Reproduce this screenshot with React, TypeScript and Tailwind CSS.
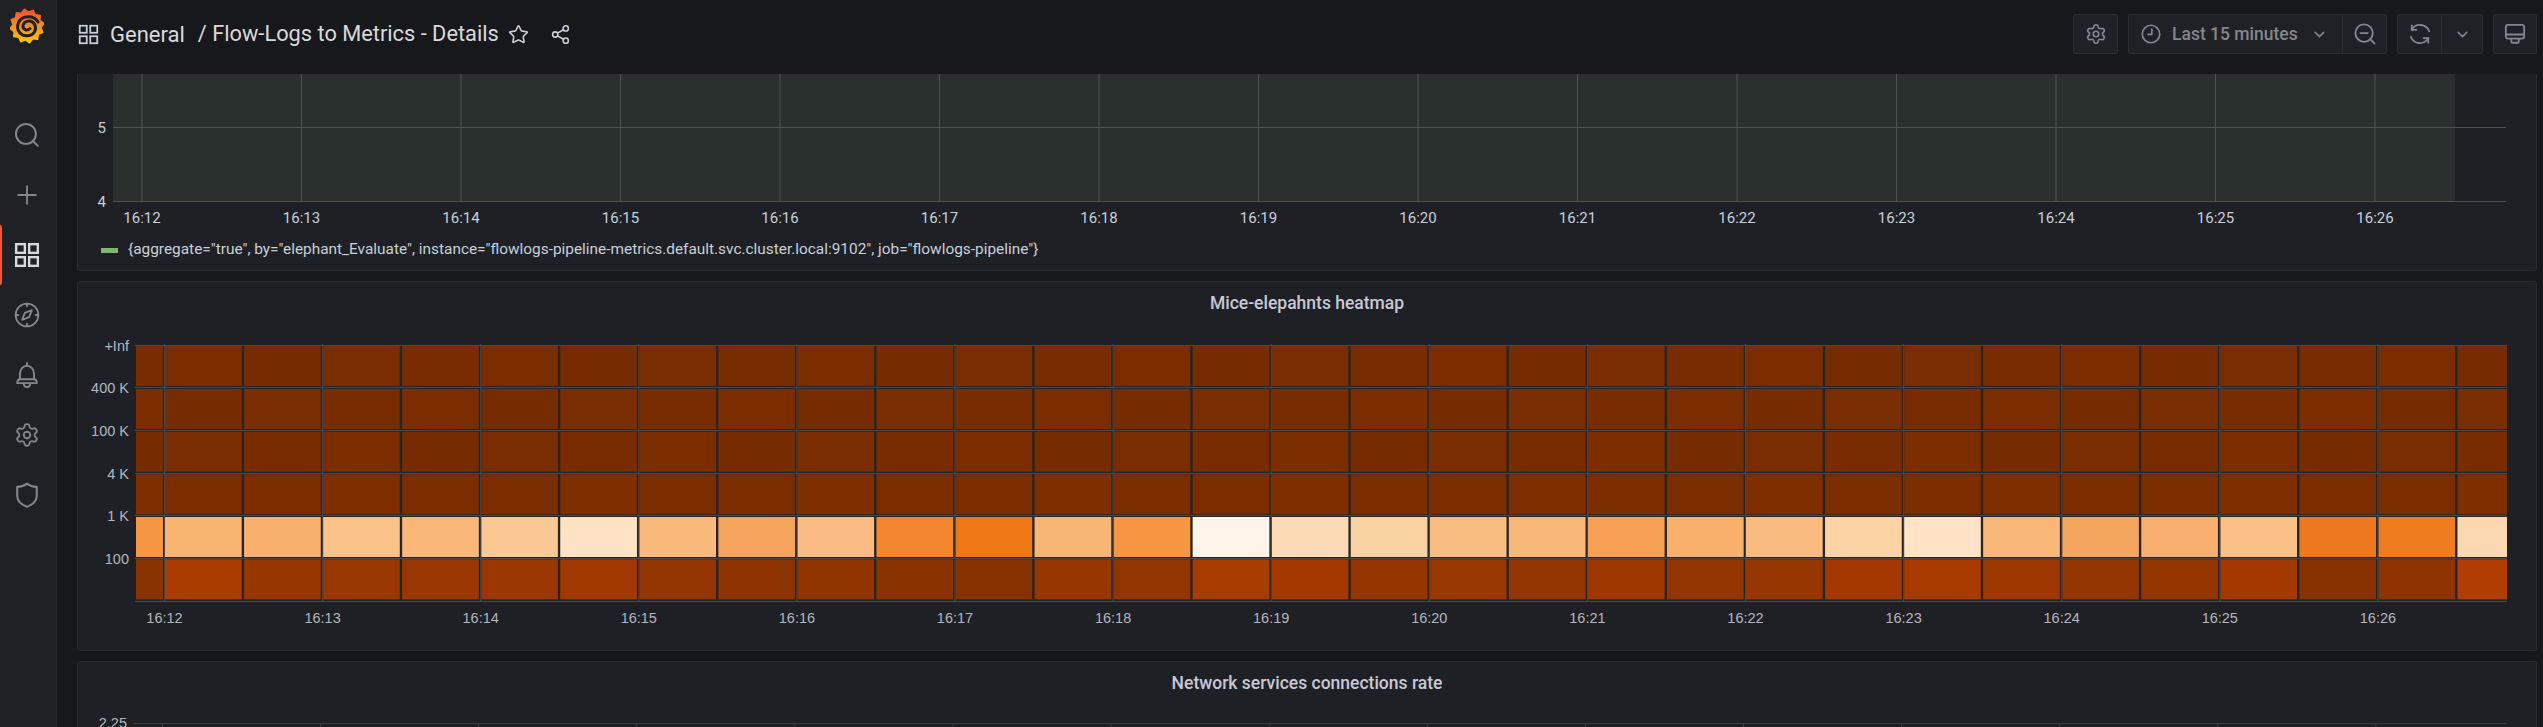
import React from "react";
import { Plus, Settings, Star, Share2, ChevronDown } from "lucide-react";

const minutes = ["16:12", "16:13", "16:14", "16:15", "16:16", "16:17", "16:18", "16:19", "16:20", "16:21", "16:22", "16:23", "16:24", "16:25", "16:26"];

const peakRow = [
  "#f59644", "#f8b471", "#f7b06e", "#fac188", "#f8b678", "#fbc894", "#fde2c4", "#f9b97b", "#f6a45c", "#fabc84", "#f58630",
  "#ee7716", "#f8b674", "#f69642", "#fef4e8", "#fbdab5", "#f9d2a2", "#f9bd80", "#f7b778", "#f6a055", "#f8b06c",
  "#f9bb7f", "#fbd3a4", "#fee3c6", "#f8b678", "#f5a65e", "#f7ae6e", "#fac088", "#ed781e", "#ef7d20", "#fcd8b0",
];

const lowRow = [
  "#873400", "#ab3c00", "#983600", "#993700", "#9a3700", "#9b3700", "#a03800", "#933500", "#8c3300", "#903400", "#8b3300",
  "#863200", "#983600", "#923500", "#a93c00", "#a33900", "#953600", "#983700", "#923500", "#9f3700", "#933500",
  "#963600", "#a23800", "#a83a00", "#9e3800", "#933500", "#943500", "#a43900", "#873200", "#8f3300", "#b13e00",
];

const darkTones = ["#792c00", "#7a2d00", "#772b00", "#7b2d00"];
const rowTops = [346, 389, 431.7, 474.3, 517, 559.3];
const rowLines = [345.5, 387.5, 430.5, 473.5, 515.5, 558.5, 601.5];
const rowLabels = ["+Inf", "400 K", "100 K", "4 K", "1 K", "100"];

const cellColor = (row: number, col: number) => {
  if (row === 4) return peakRow[col];
  if (row === 5) return lowRow[col];
  if (row === 3) return col % 3 === 0 ? "#7f2e00" : "#7c2d00";
  return darkTones[(col * 7 + row * 3) % 4];
};

const cellStart = (col: number) => 164.3 + 79.05 * (col - 1);

function GrafanaLogo() {
  const pts: string[] = [];
  for (let i = 0; i < 24; i++) {
    const a = (i / 24) * Math.PI * 2 - 1.2;
    const r = i % 2 === 0 ? 17 : 14;
    pts.push(`${(17 + Math.cos(a) * r).toFixed(1)},${(18 + Math.sin(a) * r).toFixed(1)}`);
  }
  return (
    <svg width="34" height="36" viewBox="0 0 34 36">
      <defs>
        <linearGradient id="logoFill" x1="0" y1="0" x2="0" y2="1">
          <stop offset="0" stopColor="#f0532a" />
          <stop offset="1" stopColor="#fbca0a" />
        </linearGradient>
      </defs>
      <polygon points={pts.join(" ")} fill="url(#logoFill)" strokeLinejoin="round" stroke="url(#logoFill)" strokeWidth="1.5" />
      <path
        d="M28 14 C24 7 12 7 8.5 14.5 C5 23 12 29 19 27.5 C25.5 26 27 19.5 24 15.5 C21 11.5 14 12.5 13 17.5 C12.5 21.5 17 23.5 20 20.5"
        fill="none"
        stroke="#1f2125"
        strokeWidth="3"
        strokeLinecap="round"
      />
    </svg>
  );
}

function SquaresIcon({ size, color, stroke }: { size: number; color: string; stroke: number }) {
  return (
    <svg width={size} height={size} viewBox="0 0 24 24" fill="none" stroke={color} strokeWidth={stroke}>
      <rect x="2" y="2" width="8" height="8" />
      <rect x="14" y="2" width="8" height="8" />
      <rect x="2" y="14" width="8" height="8" />
      <rect x="14" y="14" width="8" height="8" />
    </svg>
  );
}

function SearchIcon({ size = 26, color = "#85868d" }: { size?: number; color?: string }) {
  return (
    <svg width={size} height={size} viewBox="0 0 24 24" fill="none" stroke={color} strokeWidth="1.8" strokeLinecap="round">
      <circle cx="11" cy="11" r="9.2" />
      <path d="M18.2 18.2 22 22" />
    </svg>
  );
}

function CompassIcon() {
  return (
    <svg width="26" height="26" viewBox="0 0 24 24" fill="none" stroke="#85868d" strokeWidth="1.7" strokeLinecap="round" strokeLinejoin="round">
      <circle cx="12" cy="12" r="10.5" />
      <path d="M12 1.5v2.5M12 20v2.5M1.5 12H4M20 12h2.5" />
      <path d="M16.5 7.5 14 14l-6.500 2.500L10 10z" />
    </svg>
  );
}

function BellIcon() {
  return (
    <svg width="26" height="26" viewBox="0 0 24 24" fill="none" stroke="#85868d" strokeWidth="1.8" strokeLinecap="round" strokeLinejoin="round">
      <path d="M12 1v2.500" />
      <path d="M5.500 16V11a6.500 7.500 0 0 1 13 0v5" />
      <path d="M3 19.500c0-2 1-3.500 2.500-3.500h13c1.500 0 2.500 1.500 2.500 3.500z" />
      <path d="M9 19.500c0 2.500 1.500 3.500 3 3.500s3-1 3-3.500" />
    </svg>
  );
}

function ShieldIcon() {
  return (
    <svg width="26" height="26" viewBox="0 0 24 24" fill="none" stroke="#85868d" strokeWidth="1.9" strokeLinejoin="round">
      <path d="M12 1.500c2.500 2 6 3 9 3v8.500c0 4.500-4 8-9 10-5-2-9-5.500-9-10V4.500c3 0 6.500-1 9-3z" />
    </svg>
  );
}

function ClockIcon() {
  return (
    <svg width="20" height="20" viewBox="0 0 24 24" fill="none" stroke="#85868d" strokeWidth="2" strokeLinecap="round" strokeLinejoin="round">
      <circle cx="12" cy="12" r="10.500" />
      <path d="M13 6v6.500H8.500" />
    </svg>
  );
}

function ZoomOutIcon() {
  return (
    <svg width="22" height="22" viewBox="0 0 24 24" fill="none" stroke="#85868d" strokeWidth="2" strokeLinecap="round">
      <circle cx="11" cy="11" r="9.500" />
      <path d="M7 11h8M18 18l4.500 4.500" />
    </svg>
  );
}

function SyncIcon() {
  return (
    <svg width="22" height="22" viewBox="0 0 24 24" fill="none" stroke="#85868d" strokeWidth="2" strokeLinecap="round" strokeLinejoin="round">
      <path d="M3 7.500A10.500 10.500 0 0 1 22 9" />
      <path d="M3 2.500v5h5" />
      <path d="M21 16.500A10.500 10.500 0 0 1 2 15" />
      <path d="M21 21.500v-5h-5" />
    </svg>
  );
}

function MonitorIcon() {
  return (
    <svg width="22" height="22" viewBox="0 0 24 24" fill="none" stroke="#85868d" strokeWidth="2" strokeLinecap="round" strokeLinejoin="round">
      <rect x="2" y="2" width="20" height="15" rx="2.500" />
      <path d="M2 12.500h20M8 17v3.500c0 .5.500 1 1 1h6c.5 0 1-.5 1-1V17" />
    </svg>
  );
}

function SideItem({ children, active }: { children: React.ReactNode; active?: boolean }) {
  return (
    <div className="relative flex h-[60px] w-full items-center justify-center pr-[3px]">
      {active && <div className="absolute left-0 top-0 h-full w-[2px] rounded-r-sm bg-[#f05a28]" />}
      {children}
    </div>
  );
}

function ToolButton({ children, className }: { children: React.ReactNode; className?: string }) {
  return (
    <div className={`flex h-[40px] items-center justify-center rounded-[2px] border border-[#2a2c30] bg-[#1f2126] ${className ?? ""}`}>
      {children}
    </div>
  );
}

function TopChart() {
  return (
    <svg width="2458" height="156" className="block font-['Roboto',sans-serif] text-[15px]">
      <rect x="35" y="0" width="2342" height="127" fill="#2a302d" />
      {minutes.map((m, k) => {
        const x = 64 + 159.5 * k;
        return (
          <g key={m}>
            <line x1={x} x2={x} y1="0" y2="128" stroke="#4f5352" />
            <text x={x} y="149" textAnchor="middle" fill="#c7d0d9">{m}</text>
          </g>
        );
      })}
      <line x1="35" x2="2428" y1="53.500" y2="53.500" stroke="#4c504f" />
      <line x1="35" x2="2428" y1="127.500" y2="127.500" stroke="#4c504f" />
      <text x="28" y="59" textAnchor="end" fill="#c7d0d9">5</text>
      <text x="28" y="133" textAnchor="end" fill="#c7d0d9">4</text>
    </svg>
  );
}

function Heatmap() {
  const oy = 325;
  const ox = 78;
  return (
    <svg width="2458" height="310" className="block font-['Liberation_Sans',sans-serif] text-[14.500px]">
      <rect x={136 - ox} y={345 - oy} width={2507 - 136} height={256} fill="#282422" />
      {rowTops.map((top, row) =>
        peakRow.map((_, col) => {
          const x0 = col === 0 ? 136 : cellStart(col) + 0.7;
          const x1 = col === 0 ? 163 : col === 30 ? 2507 : cellStart(col) + 77.4;
          return <rect key={`${row}-${col}`} x={x0 - ox} y={top - oy} width={x1 - x0} height={40} fill={cellColor(row, col)} />;
        })
      )}
      {rowLines.map((y) => (
        <line key={y} x1={135 - ox} x2={2507 - ox} y1={y - oy} y2={y - oy} stroke="#464950" />
      ))}
      {minutes.map((m, k) => {
        const x = 164.500 + 158.100 * k - ox;
        return (
          <g key={m}>
            <line x1={x} x2={x} y1={344 - oy} y2={601 - oy} stroke="#464950" />
            <text x={x} y={623 - oy} textAnchor="middle" fill="#b4b6bd">{m}</text>
          </g>
        );
      })}
      {rowLabels.map((label, i) => (
        <text key={label} x={129 - ox} y={rowLines[i] + 5 - oy} textAnchor="end" fill="#b4b6bd">{label}</text>
      ))}
    </svg>
  );
}

function BottomChart() {
  const oy = 705;
  const ox = 78;
  return (
    <svg width="2458" height="30" className="block font-['Liberation_Sans',sans-serif] text-[14.500px]">
      <line x1={134 - ox} x2={2506 - ox} y1={723.500 - oy} y2={723.500 - oy} stroke="#3a3c41" />
      {minutes.map((m, k) => {
        const x = 162.500 + 158.100 * k - ox;
        return <line key={m} x1={x} x2={x} y1={723 - oy} y2={730 - oy} stroke="#3a3c41" />;
      })}
      <text x={127 - ox} y={728 - oy} textAnchor="end" fill="#b4b6bd">2.25</text>
    </svg>
  );
}

export default function App() {
  return (
    <div className="flex h-[727px] w-[2543px] overflow-hidden bg-[#17181c] font-['Roboto',sans-serif]">
      <aside className="flex h-full w-[57px] shrink-0 flex-col items-center border-r border-[#26282c] bg-[#1f2125]">
        <div className="flex h-[105px] w-full items-start justify-center pr-[3px] pt-[8px]">
          <GrafanaLogo />
        </div>
        <SideItem><SearchIcon /></SideItem>
        <SideItem><Plus size={30} strokeWidth={1.5} color="#85868d" /></SideItem>
        <SideItem active><SquaresIcon size={26} color="#d8d9da" stroke={2.2} /></SideItem>
        <SideItem><CompassIcon /></SideItem>
        <SideItem><BellIcon /></SideItem>
        <SideItem><Settings size={26} strokeWidth={1.7} color="#85868d" /></SideItem>
        <SideItem><ShieldIcon /></SideItem>
      </aside>

      <main className="flex min-w-0 flex-1 flex-col pl-[20px] pr-[6px]">
        <header className="flex h-[74px] shrink-0 items-start justify-between pt-[14px]">
          <div className="flex h-[40px] items-center pl-[1px]">
            <SquaresIcon size={21} color="#c7d0d9" stroke={2} />
            <span className="ml-[11px] text-[22px] text-[#d8d9da]">General</span>
            <span className="ml-[13px] text-[21.800px] text-[#d8d9da]">/ Flow-Logs to Metrics - Details</span>
            <Star size={21} strokeWidth={1.8} color="#c7d0d9" className="ml-[9px]" />
            <Share2 size={21} strokeWidth={1.8} color="#c7d0d9" className="ml-[21px]" />
          </div>
          <div className="flex items-center gap-[10px]">
            <ToolButton className="w-[45px]"><Settings size={22} strokeWidth={1.8} color="#85868d" /></ToolButton>
            <ToolButton className="w-[259px]">
              <div className="flex h-full w-[214px] items-center border-r border-[#2a2c30] pl-[12px]">
                <ClockIcon />
                <span className="ml-[11px] text-[17.500px] font-medium text-[#85868d]">Last 15 minutes</span>
                <ChevronDown size={17} strokeWidth={2} color="#85868d" className="ml-[13px]" />
              </div>
              <div className="flex h-full flex-1 items-center justify-center"><ZoomOutIcon /></div>
            </ToolButton>
            <ToolButton className="w-[86px]">
              <div className="flex h-full w-[44px] items-center justify-center border-r border-[#2a2c30]"><SyncIcon /></div>
              <div className="flex h-full flex-1 items-center justify-center"><ChevronDown size={17} strokeWidth={2} color="#85868d" /></div>
            </ToolButton>
            <ToolButton className="w-[44px]"><MonitorIcon /></ToolButton>
          </div>
        </header>

        <section className="h-[197px] shrink-0 rounded-b-[3px] border border-t-0 border-[#2a2c30] bg-[#1f2025]">
          <TopChart />
          <div className="flex h-[40px] items-center pl-[23px] text-[15.400px] text-[#c7d0d9]">
            <div className="h-[5px] w-[17px] bg-[#82b56e]" />
            <span className="ml-[10px]">{'{aggregate="true", by="elephant_Evaluate", instance="flowlogs-pipeline-metrics.default.svc.cluster.local:9102", job="flowlogs-pipeline"}'}</span>
          </div>
        </section>

        <section className="mt-[10px] h-[370px] shrink-0 rounded-[3px] border border-[#2a2c30] bg-[#1f2025]">
          <div className="flex h-[43px] items-center justify-center text-[17.500px] font-medium text-[#c7c9d6]">Mice-elepahnts heatmap</div>
          <Heatmap />
        </section>

        <section className="mt-[10px] h-[200px] shrink-0 rounded-t-[3px] border border-[#2a2c30] bg-[#1f2025]">
          <div className="flex h-[43px] items-center justify-center text-[17.500px] font-medium text-[#c7c9d6]">Network services connections rate</div>
          <BottomChart />
        </section>
      </main>
    </div>
  );
}
